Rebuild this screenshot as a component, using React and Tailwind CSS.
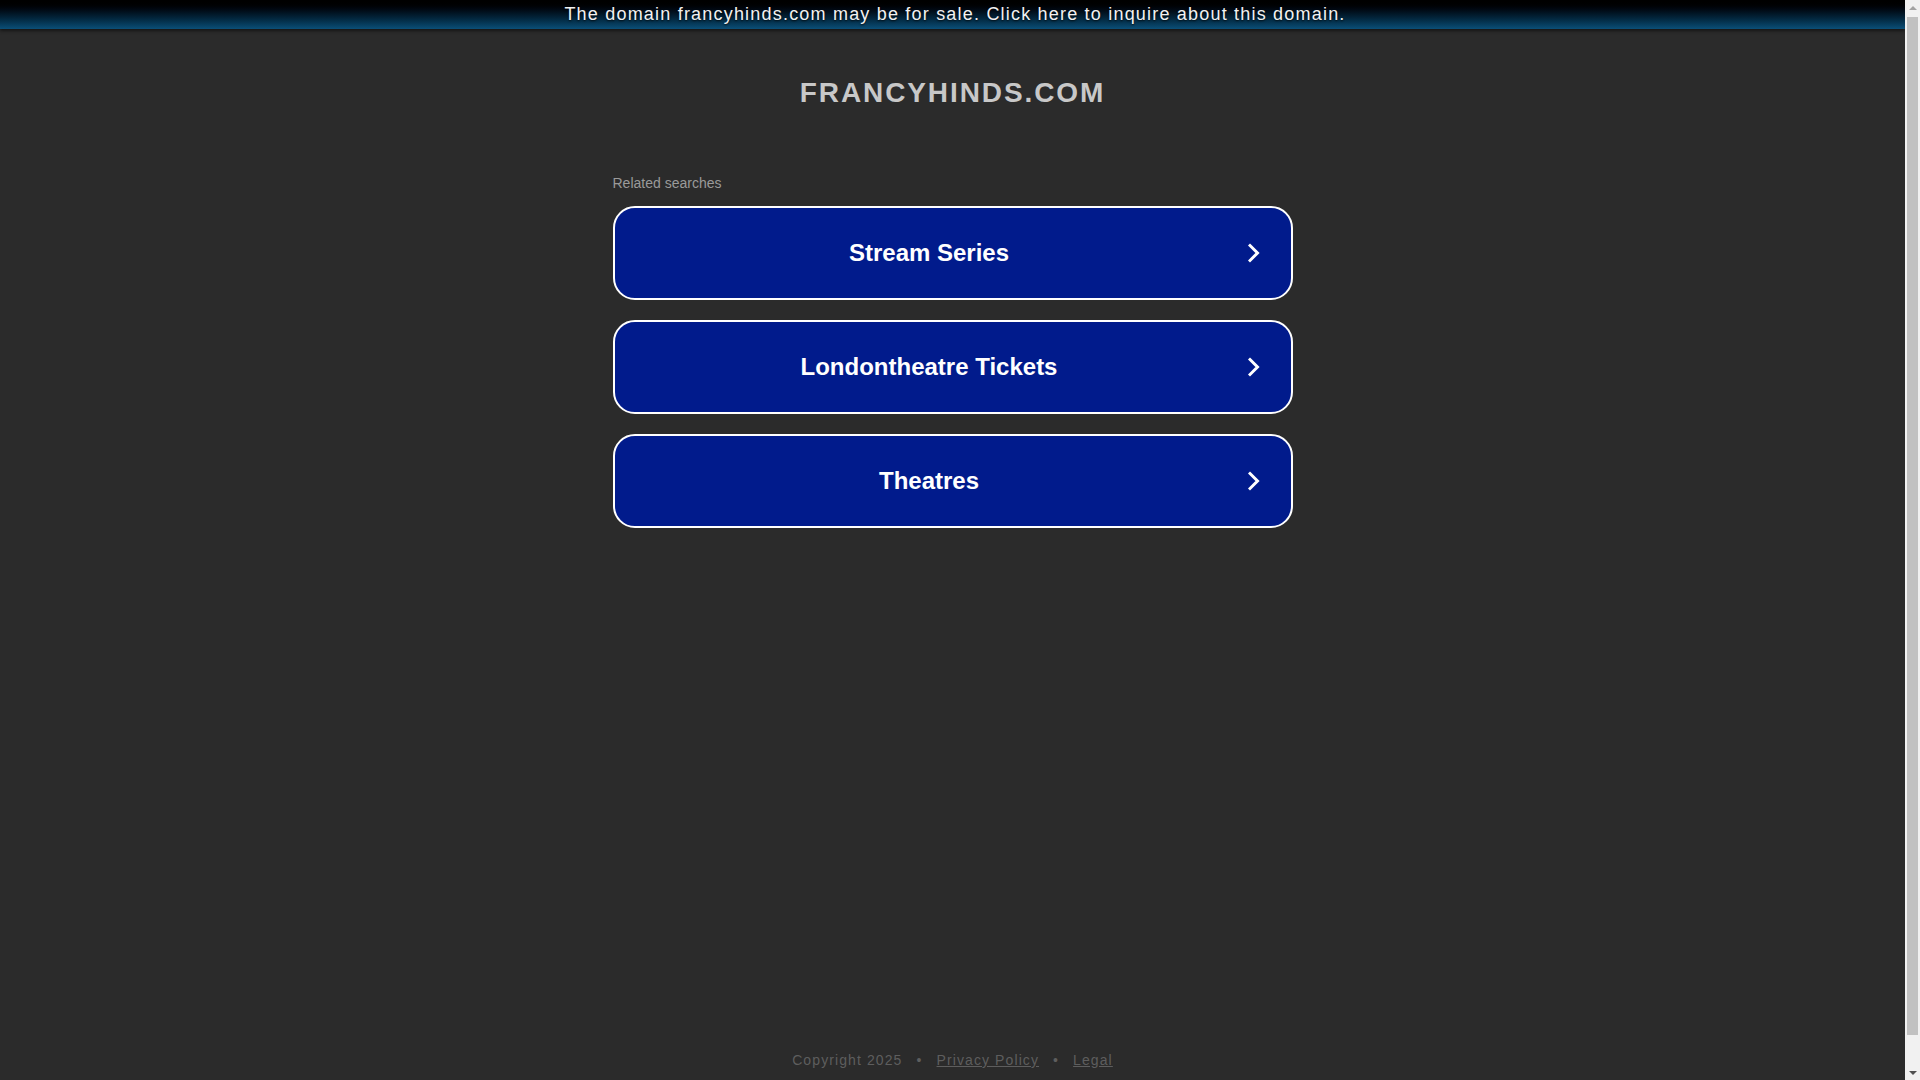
const searches = ["Stream Series", "Londontheatre Tickets", "Theatres"];

function Chevron() {
  return (
    <svg
      viewBox="0 0 12 20"
      width="12"
      height="20"
      fill="none"
      stroke="currentColor"
      strokeWidth="3"
      strokeLinecap="square"
      aria-hidden="true">
      <path d="M2 2.5 9.5 10 2 17.5" />
    </svg>
  );
}

function Scrollbar() {
  return (
    <div className="w-[15px] shrink-0 h-[1080px] bg-[#f1f1f1] flex flex-col items-center">
      <div className="h-[15px] w-full flex items-center justify-center">
        <div className="w-0 h-0 border-x-[4px] border-x-transparent border-b-[4px] border-b-[#a3a3a3]" />
      </div>
      <div className="mt-[2px] w-[11px] h-[1018px] bg-[#c1c1c1]" />
      <div className="flex-1" />
      <div className="h-[15px] w-full flex items-center justify-center">
        <div className="w-0 h-0 border-x-[4px] border-x-transparent border-t-[4px] border-t-[#505050]" />
      </div>
    </div>
  );
}

export default function App() {
  return (
    <div className="h-[1080px] overflow-hidden flex font-['Arial','Liberation_Sans',sans-serif]">
      <div className="flex-1 min-h-[1112px] bg-[#2b2b2b] flex flex-col">
        {/* Announcement bar */}
        <a
          href="#"
          className="block h-[29px] pl-[5px] bg-gradient-to-b from-black to-[#0b4f78] text-center text-[18px] leading-[29px] tracking-[1.2px] text-[#f2f2f2] [text-shadow:0_1px_2px_rgba(0,0,0,0.8)] shadow-[0_2px_3px_rgba(0,0,0,0.5)]">
          The domain francyhinds.com may be for sale. Click here to inquire about this domain.
        </a>

        <main className="flex-1 flex flex-col items-center">
          <h1 className="mt-[48px] text-[28px] leading-[32px] font-bold tracking-[1.9px] text-[#c8c8c8]">
            FRANCYHINDS.COM
          </h1>

          <div className="w-[680px] mt-[66px]">
            <p className="text-[14px] leading-[16px] text-[#9a9a9a]">Related searches</p>
            <div className="mt-[15px] flex flex-col gap-[20px]">
              {searches.map((s) => (
                <a
                  key={s}
                  href="#"
                  className="flex items-center h-[94px] rounded-[22px] border-2 border-white bg-[#011b8c] text-white">
                  <span className="flex-1 pl-[2px] text-center text-[24px] font-bold">{s}</span>
                  <span className="ml-[6px] mr-[31px] flex">
                    <Chevron />
                  </span>
                </a>
              ))}
            </div>
          </div>
        </main>

        <footer className="pb-[44px] flex justify-center items-center gap-[14px] text-[14px] leading-[16px] tracking-[1.1px] text-[#5e5e5e]">
          <span>Copyright 2025</span>
          <span>•</span>
          <a href="#" className="underline">Privacy Policy</a>
          <span>•</span>
          <a href="#" className="underline">Legal</a>
        </footer>
      </div>
      <Scrollbar />
    </div>
  );
}
